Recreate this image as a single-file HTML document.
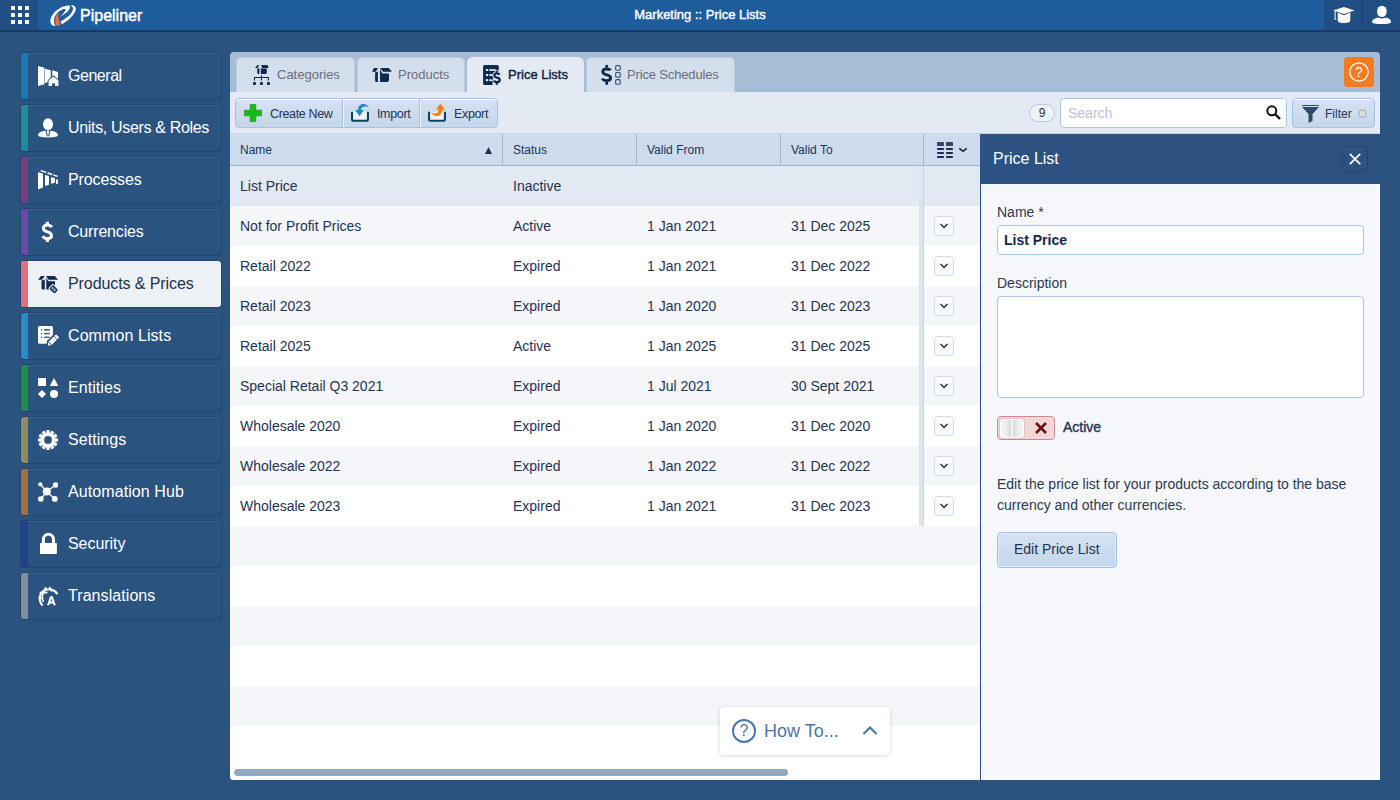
<!DOCTYPE html>
<html><head><meta charset="utf-8">
<style>
*{box-sizing:border-box;margin:0;padding:0}
html,body{width:1400px;height:800px;overflow:hidden;background:#2a5380;font-family:"Liberation Sans",sans-serif;position:relative}
div,span,svg{position:absolute}
#top{left:0;top:0;width:1400px;height:32px;background:#1f5c9c;border-bottom:2px solid #173966}
#gridbox{left:0;top:0;width:38px;height:30px;background:#214f83}
#gridbox i{position:absolute;width:4px;height:4px;background:#fff}
#logo{left:46px;top:2px}
#brand{left:80px;top:7px;color:#fff;font-size:16px;-webkit-text-stroke:0.45px #fff}
#title{left:0;width:1400px;top:7px;text-align:center;color:#fff;font-size:13px;-webkit-text-stroke:0.4px #fff}
#hat{left:1324px;top:0;width:38px;height:30px;background:#214f83}
#usr{left:1362px;top:0;width:38px;height:30px;background:#214f83;border-left:1px solid #1b4474}
.side{left:21px;width:200px;height:46px;background:#2a5380;border-radius:3px;box-shadow:0 0 0 1px #23466f, 0 1px 0 0 #142f52, inset 0 1px 0 #3c6290;}
.side.act{background:#edf1f6;box-shadow:0 0 0 1px #23466f, 0 1px 0 0 #142f52}
.side .bar{left:0;top:0;bottom:0;width:7px;border-radius:3px 0 0 3px}
.side .lbl{left:47px;top:14px;color:#fff;font-size:16px;letter-spacing:-0.22px;white-space:nowrap}
.side.act .lbl{color:#22324e}
.side .ic{left:17px;top:13px;width:20px;height:22px}
#panel{left:230px;top:52px;width:1150px;height:728px;background:#fff;border-radius:4px 4px 0 0;overflow:hidden}
#tabbar{left:230px;top:52px;width:1150px;height:40px;background:#a7bcd5;border-radius:4px 4px 0 0}
.tab{top:57px;height:35px;background:#d3dfec;border-radius:6px 6px 0 0;color:#6a6e76;font-size:13px;box-shadow:inset 1px 0 0 #bccde0, inset -1px 0 0 #bccde0, inset 0 1px 0 #bccde0}
.tab.act{background:#e3eaf3;color:#15233d;-webkit-text-stroke:0.4px #15233d;box-shadow:none}
.tab span{top:10px;white-space:nowrap}
#toolbar{left:230px;top:92px;width:1150px;height:42px;background:#e3eaf3;border-bottom:1px solid #c5d3e3}
.btngrp{left:235px;top:98px;width:263px;height:30px;border:1px solid #a5c2e3;border-radius:4px;background:linear-gradient(#d5e2f1,#c4d6eb);overflow:hidden;box-shadow:inset 0 1px 0 #fff}
.btn{top:0;height:28px;color:#233556;font-size:12.5px;letter-spacing:-0.35px}
.btn span{top:8px;white-space:nowrap}
.sep{top:0;width:1px;height:28px;background:#a5c2e3;box-shadow:1px 0 0 #eef4fa}
#badge{left:1029px;top:104px;width:26px;height:18px;border:1px solid #b6c8de;border-radius:9px;background:#eef3f9;color:#333;font-size:12px;text-align:center;line-height:16px}
#search{left:1060px;top:98px;width:227px;height:30px;border:1px solid #a9c6e8;border-radius:4px;background:#fff}
#search span{left:7px;top:6px;color:#b9c4d1;font-size:14px}
#filter{left:1292px;top:98px;width:83px;height:30px;border:1px solid #a5c2e3;border-radius:4px;background:linear-gradient(#d5e2f1,#c4d6eb);box-shadow:inset 0 1px 0 #fff}
#help{left:1344px;top:57px;width:30px;height:30px;background:#f47b20;border-radius:4px}
#ghead{left:230px;top:134px;width:750px;height:32px;background:#cddcec;border-bottom:1px solid #9fb6d0;box-shadow:inset 0 1px 0 #dae5f1}
.gh{top:10px;color:#1e3356;font-size:12px;white-space:nowrap}
.gsep{top:0;width:1px;height:31px;background:#a0b7d1}
.row{left:230px;width:750px;height:40px;overflow:hidden}
.row span{top:12px;font-size:14px;color:#1f3354;white-space:nowrap}
.dd{left:704px;top:10px;width:20px;height:20px;border:1px solid #cfdbea;border-radius:4px;background:#f8fafc}
.dd svg{left:4px;top:6px}
#frz{left:919px;top:166px;width:4px;height:360px;background:#dce4ee}
#frz2{left:923px;top:166px;width:1px;height:360px;background:#c9d6e5}
#scroll{left:234px;top:769px;width:554px;height:7px;background:#93a9bf;border-radius:4px}
#howto{left:720px;top:707px;width:170px;height:48px;background:#fff;border-radius:4px;box-shadow:0 1px 4px rgba(0,0,0,.15)}
#howto span{left:44px;top:14px;font-size:18px;color:#4a76a8;white-space:nowrap}
#rph{left:980px;top:134px;width:400px;height:50px;background:#2c5282}
#rph span{left:13px;top:16px;color:#fff;font-size:16px}
#rpb{left:980px;top:184px;width:400px;height:596px;background:#f5f7fa;border-left:1px solid #2c5282}
#close{left:1342px;top:146px;width:26px;height:26px;border:1px solid #24466f;border-radius:3px}
.flbl{font-size:14px;color:#2a3a55;white-space:nowrap}
#nameinp{left:997px;top:225px;width:367px;height:30px;border:1px solid #a9c6e8;border-radius:4px;background:#fff}
#nameinp span{left:6px;top:6px;font-size:14px;font-weight:bold;color:#14264a}
#descinp{left:997px;top:296px;width:367px;height:102px;border:1px solid #a9c6e8;border-radius:4px;background:#fff}
#tog{left:997px;top:416px;width:58px;height:24px;border:1px solid #d3868c;border-radius:4px;background:#f3d6d8}
#tog .knob{left:2px;top:2px;width:24px;height:19px;border:1px solid #fff;border-radius:3px;box-shadow:0 0 0 1px #e2c4c6;background:linear-gradient(90deg,#f6f6f6 0%,#ececec 25%,#dadada 42%,#fafafa 50%,#dadada 58%,#ececec 75%,#f6f6f6 100%)}
#actlbl{left:1063px;top:419px;font-size:14px;color:#253856;-webkit-text-stroke:0.4px #253856}
#desc{left:997px;top:474px;width:370px;font-size:14px;line-height:21px;color:#2c3a50}
#editbtn{left:997px;top:532px;width:120px;height:36px;border:1px solid #9dbde3;border-radius:4px;background:linear-gradient(#d7e3f1,#c3d6ec);box-shadow:inset 0 0 0 1px #e4edf7}
#editbtn span{left:16px;top:8px;font-size:14px;color:#22324e;white-space:nowrap}
#gridbg{left:230px;top:166px;width:750px;height:614px;background:#fff;border-radius:0 0 0 3px}

</style></head><body>
<div id="top"></div>
<div id="gridbox"><i style="left:11px;top:6px"></i><i style="left:18px;top:6px"></i><i style="left:25px;top:6px"></i><i style="left:11px;top:13px"></i><i style="left:18px;top:13px"></i><i style="left:25px;top:13px"></i><i style="left:11px;top:20px"></i><i style="left:18px;top:20px"></i><i style="left:25px;top:20px"></i></div>
<svg id="logo" width="34" height="26" viewBox="0 0 34 26"><path fill="#fff" d="M7.8 24C3.5 22.5 3 17 7.5 11.5C11.5 6.8 17.5 3.8 22.3 3.6C24.6 3.6 24.6 5.6 22.8 8C20.8 10.6 17.5 13 14 14.8C16.2 12.6 18.6 10.2 19.4 8.4C20 7 19 6.6 16.5 7.4C12.5 8.8 9 12.6 8.2 16.6C7.7 19.6 8.3 22.2 9.6 24Z"/><path fill="#fff" d="M25.3 3C28.6 3.4 30.6 5.6 29.6 8.6C28 13.2 22.2 19 16.1 22.3L14.3 19.6C19.2 17.2 24.2 13.2 26.4 9.2C27.6 6.8 27 4.9 25.3 3.8Z"/><path fill="#f26b3a" d="M12.4 10.2C10.5 12.5 9 16 9.2 19C9.3 21.5 10.3 23.5 11.2 24L14.6 22.6C13 20 12.2 16 12.4 10.2Z"/></svg>
<div id="brand">Pipeliner</div>
<div id="title">Marketing :: Price Lists</div>
<div id="hat"><svg style="left:9px;top:0px" width="23" height="26" viewBox="0 0 23 26"><path fill="#fff" d="M0.1 10.6L11 7.1L21.6 10.6L11 14Z"/><path fill="#fff" d="M4.7 12.4L11 15.2L17.3 12.4V20.4Q17.3 22.9 11 22.9Q4.7 22.9 4.7 20.4Z"/><path stroke="#fff" stroke-width="1" d="M2.1 10.6V17.6"/><path fill="#fff" d="M0.9 19.6L2.3 17.2L3.3 19.6Z"/></svg></div>
<div id="usr"><svg style="left:8px;top:0px" width="21" height="26" viewBox="0 0 21 26"><ellipse cx="10.9" cy="11.4" rx="4.8" ry="5.7" fill="#fff"/><path fill="#fff" d="M1 22C1 19.6 3.4 18 7.2 17.4Q10.9 19.6 14.6 17.4C18.4 18 20.1 19.6 20.1 22Q20.1 24 10.9 24Q1 24 1 22Z"/></svg></div>
<div class="side" style="top:53px"><div class="bar" style="background:#1b79b9"></div><div class="ic"><svg width="22" height="22" viewBox="0 0 22 22" style="overflow:visible"><path fill="#fff" d="M0 0L6.5 1.75V18.25L0 20Z M7 2.75L12.75 4.25V13L8.8 16.6L7 17Z M14.25 4.25L20 6V13.6L15.5 9.8L14.25 10.9Z"/><path fill="#2a5380" stroke="#2a5380" stroke-width="1.6" d="M10.6 14.6L15.5 10.4L20.4 14.6V20H10.6Z"/><path fill="#fff" d="M10.6 14.6L15.5 10.4L20.4 14.6V20H17.1V17.4H14V20H10.6Z"/></svg></div><div class="lbl" style="letter-spacing:-0.46px">General</div></div>
<div class="side" style="top:105px"><div class="bar" style="background:#1f8d99"></div><div class="ic"><svg width="22" height="22" viewBox="0 0 22 22" style="overflow:visible"><ellipse cx="10" cy="6.2" rx="5" ry="6" fill="#fff"/><path fill="#fff" d="M0 17.6C0 14.6 3 13.2 7.4 12.7H12.6C17 13.2 20 14.6 20 17.6Q20 19.4 10 19.4Q0 19.4 0 17.6Z"/><path fill="none" stroke="#2a5380" stroke-width="1.1" d="M8.1 12.6L9.3 18.4 M11.9 12.6L10.7 18.4"/></svg></div><div class="lbl" style="letter-spacing:-0.33px">Units, Users &amp; Roles</div></div>
<div class="side" style="top:157px"><div class="bar" style="background:#7c3d80"></div><div class="ic"><svg width="20" height="20" viewBox="0 0 20 20"><path fill="#fff" d="M0 2.2L5 3.6V17.6L0 19.4Z M7 5L11 6V14.8L7 15.9Z M13 7.2L17 8.1V12.8L13 13.8Z M18 9.2L20 9.8V13.6L18 14.2Z"/><path stroke="#fff" stroke-width="1.4" d="M2.6 0.6L8.2 2.4 M9.6 3L14.2 4.5 M15.3 5L19.6 6.4"/></svg></div><div class="lbl" style="letter-spacing:-0.13px">Processes</div></div>
<div class="side" style="top:209px"><div class="bar" style="background:#6a4aa6"></div><div class="ic"><svg width="22" height="22" viewBox="0 0 22 22" style="overflow:visible"><path fill="none" stroke="#fff" stroke-width="3" d="M13.6 5.2C12.8 3.8 11.2 3.1 9.3 3.1C6.9 3.1 5.4 4.4 5.4 6.3C5.4 8.5 7.4 9.3 9.5 9.9C11.8 10.5 13.5 11.4 13.5 13.7C13.5 15.7 11.7 16.6 9.3 16.6C7.2 16.6 5.6 15.8 4.9 14.2"/><rect x="7.8" y="-0.25" width="3.2" height="2.4" fill="#fff"/><rect x="7.8" y="17.4" width="3.2" height="2.6" fill="#fff"/></svg></div><div class="lbl" style="letter-spacing:-0.18px">Currencies</div></div>
<div class="side act" style="top:261px"><div class="bar" style="background:#e0707a"></div><div class="ic"><svg width="22" height="22" viewBox="0 0 22 22"><path fill="#0f2a4d" d="M0 5.8L3 2H6.8L4 5.8Z M8.2 2H16.8L20 5.8H10.5Z M3.5 6.6L6.8 5.4V15.6H5Q3.5 15.6 3.5 14.1Z M8.3 3.2L10.3 7.2H17V12L14 15.6H8.3Z"/><g transform="rotate(45 15.6 15.2)"><rect x="11" y="11.6" width="9.4" height="7.2" rx="2" fill="#edf1f6"/><rect x="12" y="12.6" width="7.4" height="5.2" rx="1.4" fill="#0f2a4d"/><rect x="15.3" y="13.8" width="3" height="2.8" fill="#8497b0"/><circle cx="13.9" cy="15.2" r="0.9" fill="#edf1f6"/></g></svg></div><div class="lbl" style="letter-spacing:-0.09px">Products &amp; Prices</div></div>
<div class="side" style="top:313px"><div class="bar" style="background:#2a8cc4"></div><div class="ic"><svg width="22" height="22" viewBox="0 0 22 22"><path fill="#fff" d="M1.5 0H13.4Q14.9 0 14.9 1.5V9L9 15L8.6 17.75H1.5Q0 17.75 0 16.25V1.5Q0 0 1.5 0Z"/><g fill="#2a5380"><rect x="2.9" y="3.1" width="1.2" height="1.5"/><rect x="6.1" y="3.1" width="5.7" height="1.5"/><rect x="2.9" y="6.9" width="1.2" height="1.3"/><rect x="6.1" y="6.9" width="5.7" height="1.3"/><rect x="2.9" y="10.6" width="1.2" height="1.3"/><rect x="6.1" y="10.6" width="5.7" height="1.3"/></g><g transform="translate(9.9 19.6) rotate(-45)"><g fill="#2a5380" stroke="#2a5380" stroke-width="2"><path d="M0 0L2.6 -2.2V2.2Z"/><rect x="3.2" y="-2.2" width="10.4" height="4.4"/></g><g fill="#fff"><path d="M0 0L2.6 -2.2V2.2Z"/><rect x="3.3" y="-2.2" width="7.2" height="4.4"/><rect x="11.2" y="-2.2" width="2.6" height="4.4" rx="0.8"/></g></g></svg></div><div class="lbl" style="letter-spacing:0.08px">Common Lists</div></div>
<div class="side" style="top:365px"><div class="bar" style="background:#1f8e48"></div><div class="ic"><svg width="20" height="20" viewBox="0 0 20 20"><rect x="0" y="0" width="8" height="8" fill="#fff"/><path fill="#fff" d="M16 0L20.2 8H11.8Z"/><path fill="#fff" d="M4 12L8 16L4 20L0 16Z"/><circle cx="16" cy="16" r="4" fill="#fff"/></svg></div><div class="lbl" style="letter-spacing:0.07px">Entities</div></div>
<div class="side" style="top:417px"><div class="bar" style="background:#8c8c5c"></div><div class="ic"><svg width="20" height="20" viewBox="0 0 20 20"><g fill="#fff"><circle cx="10" cy="10" r="7.6"/><rect x="8.4" y="0" width="3.2" height="4" transform="rotate(0 10 10)"/><rect x="8.4" y="0" width="3.2" height="4" transform="rotate(30 10 10)"/><rect x="8.4" y="0" width="3.2" height="4" transform="rotate(60 10 10)"/><rect x="8.4" y="0" width="3.2" height="4" transform="rotate(90 10 10)"/><rect x="8.4" y="0" width="3.2" height="4" transform="rotate(120 10 10)"/><rect x="8.4" y="0" width="3.2" height="4" transform="rotate(150 10 10)"/><rect x="8.4" y="0" width="3.2" height="4" transform="rotate(180 10 10)"/><rect x="8.4" y="0" width="3.2" height="4" transform="rotate(210 10 10)"/><rect x="8.4" y="0" width="3.2" height="4" transform="rotate(240 10 10)"/><rect x="8.4" y="0" width="3.2" height="4" transform="rotate(270 10 10)"/><rect x="8.4" y="0" width="3.2" height="4" transform="rotate(300 10 10)"/><rect x="8.4" y="0" width="3.2" height="4" transform="rotate(330 10 10)"/></g><circle cx="10" cy="10" r="3.9" fill="#2a5380"/></svg></div><div class="lbl" style="letter-spacing:0.05px">Settings</div></div>
<div class="side" style="top:469px"><div class="bar" style="background:#a0703e"></div><div class="ic"><svg width="20" height="20" viewBox="0 0 20 20"><g fill="#fff"><circle cx="2.3" cy="2.3" r="2.1"/><circle cx="17.6" cy="3" r="2.8"/><circle cx="2.8" cy="17" r="2.8"/><circle cx="16.8" cy="16.9" r="2.9"/><circle cx="8.8" cy="9.6" r="4"/></g><path fill="none" stroke="#fff" stroke-width="1.3" d="M2.3 2.3L8.8 9.6L17.6 3 M2.8 17L8.8 9.6L16.8 16.9"/></svg></div><div class="lbl" style="letter-spacing:0.09px">Automation Hub</div></div>
<div class="side" style="top:521px"><div class="bar" style="background:#263f8d"></div><div class="ic"><svg width="22" height="22" viewBox="0 0 22 22" style="overflow:visible"><path fill="none" stroke="#fff" stroke-width="3" d="M5.4 9.5V5.4A5.05 5.05 0 0 1 15.5 5.4V9.5"/><rect x="2" y="8.9" width="16.9" height="11.1" rx="0.8" fill="#fff"/></svg></div><div class="lbl" style="letter-spacing:-0.06px">Security</div></div>
<div class="side" style="top:573px"><div class="bar" style="background:#7e909e"></div><div class="ic"><svg width="22" height="22" viewBox="0 0 22 22" style="overflow:visible"><path fill="none" stroke="#fff" stroke-width="2.1" d="M19.4 8.2A9.4 9.4 0 1 0 4.6 19.4"/><path fill="none" stroke="#fff" stroke-width="1.6" d="M1.6 6.6H9.4 M8.2 1.4Q4.8 5 4.4 10Q4.2 13.4 5.4 16 M11.2 1.2Q13.2 3 13.8 5.6 M0.6 12.2H4.6"/><path fill="#fff" fill-rule="evenodd" stroke="#2a5380" stroke-width="1.2" paint-order="stroke" d="M9 19.2L12.2 10H14.6L17.8 19.2H15.5L14.9 17.4H11.9L11.3 19.2Z M12.5 15.5H14.3L13.4 12.6Z"/></svg></div><div class="lbl" style="letter-spacing:0.07px">Translations</div></div>
<div id="tabbar"></div>
<div class="tab" style="left:236px;width:119px"><svg style="left:12px;top:3px" width="30" height="30" viewBox="0 0 30 30"><g fill="#0f2a4d"><path d="M7 7.9L9.5 4.9H11.2L9.6 7.9Z M13.1 4.9H19.4L20.8 7.9H14.3Z M9.2 8.4L11.4 8.2V13.9H10.6Q9.2 13.9 9.2 12.4Z M12.8 8.2L14 8.6H18.8V12.4Q18.8 13.9 17.3 13.9H12.8Z"/><rect x="5" y="22.1" width="2.9" height="2.8"/><rect x="12" y="22.1" width="2.9" height="2.8"/><rect x="19" y="22.1" width="2.9" height="2.8"/></g><path fill="none" stroke="#0f2a4d" stroke-width="1.1" d="M13.45 15.2V20.6 M6.5 20.6V17.5H20.4V20.6"/></svg><span style="left:41px">Categories</span></div>
<div class="tab" style="left:357px;width:108px"><svg style="left:11px;top:3px" width="30" height="30" viewBox="0 0 30 30"><path fill="#0f2a4d" d="M4 11.8L6 7.9H9.9L7.8 11.8Z M12 7.9H20.8L24 11.8H15.2Z M7.1 12.6L9.9 11.4V21.9H8.6Q7.1 21.9 7.1 20.4Z M12 9L14.3 13.6H21V19.9Q21 21.9 19 21.9H12Z"/></svg><span style="left:41px">Products</span></div>
<div class="tab act" style="left:467px;width:117px"><svg style="left:11px;top:3px" width="30" height="30" viewBox="0 0 30 30"><path fill="#0f2a4d" d="M6.6 4.9H19.3Q20.8 4.9 20.8 6.4V12H16L14.5 24.9H6.6Q5.1 24.9 5.1 23.4V6.4Q5.1 4.9 6.6 4.9Z"/><g fill="#e3eaf3"><rect x="7.9" y="9" width="2.2" height="2"/><rect x="7.9" y="14" width="2.2" height="2.1"/><rect x="7.9" y="19.1" width="2.2" height="2.1"/><rect x="11.2" y="9.2" width="6.6" height="1.7"/><rect x="11.2" y="14.2" width="3.8" height="1.7"/><rect x="11.2" y="19.3" width="3.4" height="1.7"/></g><path fill="none" stroke="#e3eaf3" stroke-width="4.1" d="M21.7 14.6C21.1 13.8 20.1 13.45 18.8 13.45C17.2 13.45 16.4 14.3 16.4 15.4C16.4 16.8 17.7 17.3 19.1 17.7C20.6 18.1 21.75 18.7 21.75 19.9C21.75 21.3 20.5 22.05 18.8 22.05C17.4 22.05 16.4 21.5 15.9 20.5"/><rect x="17" y="10.2" width="3.5" height="3" fill="#e3eaf3"/><rect x="17" y="22.3" width="3.5" height="3.2" fill="#e3eaf3"/><path fill="none" stroke="#0f2a4d" stroke-width="2.3" d="M21.7 14.6C21.1 13.8 20.1 13.45 18.8 13.45C17.2 13.45 16.4 14.3 16.4 15.4C16.4 16.8 17.7 17.3 19.1 17.7C20.6 18.1 21.75 18.7 21.75 19.9C21.75 21.3 20.5 22.05 18.8 22.05C17.4 22.05 16.4 21.5 15.9 20.5"/><rect x="17.7" y="10.9" width="2.1" height="1.9" fill="#0f2a4d"/><rect x="17.7" y="22.9" width="2.1" height="2" fill="#0f2a4d"/></svg><span style="left:41px">Price Lists</span></div>
<div class="tab" style="left:586px;width:149px"><svg style="left:10px;top:3px" width="30" height="30" viewBox="0 0 30 30"><path fill="none" stroke="#0f2a4d" stroke-width="2.9" d="M14.6 10.2C13.8 9.2 12.5 8.95 10.7 8.95C8.3 8.95 6.8 10.1 6.8 11.8C6.8 13.9 8.8 14.4 10.9 14.9C13.2 15.4 14.65 16.3 14.65 18.1C14.65 19.9 12.9 20.65 10.6 20.65C8.6 20.65 7 20 6.3 18.5"/><rect x="9.35" y="4.9" width="2.7" height="2.8" fill="#0f2a4d"/><rect x="9.35" y="21.9" width="2.7" height="2.85" fill="#0f2a4d"/><g fill="none" stroke="#3a5070" stroke-width="1.1"><rect x="19.65" y="5.65" width="4.6" height="4.6" rx="1"/><rect x="19.65" y="12.55" width="4.6" height="4.6" rx="1"/><rect x="19.65" y="19.65" width="4.6" height="4.6" rx="1"/></g></svg><span style="left:41px;letter-spacing:-0.15px">Price Schedules</span></div>
<div id="help"><svg style="left:5px;top:5px" width="20" height="20" viewBox="0 0 20 20"><circle cx="10" cy="10" r="9.2" fill="none" stroke="#fff" stroke-width="1.2"/><text x="10" y="15" text-anchor="middle" font-family="Liberation Sans" font-size="14" fill="#fff">?</text></svg></div>

<div id="toolbar"></div>
<div class="btngrp">
  <div class="btn" style="left:0;width:107px"><svg style="left:8px;top:5px" width="18" height="18" viewBox="0 0 18 18"><path fill="#16bd19" stroke="#0f9a13" stroke-width="0.7" d="M6.2 0.4H11.8V6.2H17.6V11.8H11.8V17.6H6.2V11.8H0.4V6.2H6.2Z"/></svg><span style="left:34px">Create New</span></div>
  <div class="sep" style="left:106px"></div>
  <div class="btn" style="left:107px;width:77px"><svg style="left:5px;top:1px" width="25" height="25" viewBox="0 0 25 25"><rect x="4" y="11.7" width="16" height="9" fill="#eef2f6"/><path fill="none" stroke="#0b4461" stroke-width="2.1" d="M4.05 11.7V19.6Q4.05 20.8 5.2 20.8H18.8Q19.95 20.8 19.95 19.6V11.7"/><path fill="#1e8cba" d="M7.2 10H10.1C10 6.5 12 4 15.5 4C18 4 19.8 5.5 20.6 7.6C19.3 6.6 17.8 6.3 16.3 6.5C14.2 6.8 13 8.2 13 10H15.9L11.6 16.3Z"/></svg><span style="left:34px">Import</span></div>
  <div class="sep" style="left:183px"></div>
  <div class="btn" style="left:184px;width:78px"><svg style="left:5px;top:1px" width="25" height="25" viewBox="0 0 25 25"><rect x="4" y="11.7" width="16" height="9" fill="#eef2f6"/><path fill="none" stroke="#0b4461" stroke-width="2.1" d="M4.05 11.7V19.6Q4.05 20.8 5.2 20.8H18.8Q19.95 20.8 19.95 19.6V11.7"/><path fill="#f77f00" d="M15.5 3.8L20 9.4H17.2C17.2 13.5 15 16 11.5 16C9 16 7.2 14.5 6 12.2C7.3 13.2 8.8 13.6 10.2 13.4C12.4 13.1 13.8 11.8 13.8 9.4H11Z"/></svg><span style="left:34px">Export</span></div>
</div>
<div id="badge">9</div>
<div id="search"><span>Search</span><svg style="left:205px;top:6px" width="15" height="15" viewBox="0 0 15 15"><circle cx="5.8" cy="5.8" r="4.5" fill="none" stroke="#111" stroke-width="2"/><path stroke="#111" stroke-width="2.4" d="M9 9L14 14"/></svg></div>
<div id="filter"><svg style="left:9px;top:5px" width="17" height="19" viewBox="0 0 17 19"><path fill="#2c4a6c" d="M0 1H17V2H0Z M0 3H17L10.5 10V17L6.5 19V10Z"/></svg><span style="left:32px;top:8px;font-size:12px;color:#233556">Filter</span><svg style="left:65px;top:10px" width="9" height="9" viewBox="0 0 9 9"><circle cx="4.5" cy="4.5" r="3.8" fill="#dcdcdc" stroke="#9aa6b3" stroke-width="0.9"/></svg></div>

<div id="ghead"></div>
<span class="gh" style="left:240px;top:143px">Name</span>
<svg style="left:485px;top:147px" width="7" height="7" viewBox="0 0 7 7"><path d="M3.5 0L7 7H0Z" fill="#1e2f55"/></svg>
<div class="gsep" style="left:502px;top:134px"></div>
<span class="gh" style="left:513px;top:143px">Status</span>
<div class="gsep" style="left:636px;top:134px"></div>
<span class="gh" style="left:647px;top:143px">Valid From</span>
<div class="gsep" style="left:780px;top:134px"></div>
<span class="gh" style="left:791px;top:143px">Valid To</span>
<div class="gsep" style="left:923px;top:134px"></div>
<svg style="left:936px;top:142px" width="32" height="17" viewBox="0 0 32 17"><g fill="#1f2d55"><rect x="1" y="0" width="7" height="4" rx="0.6" fill="#34456e"/><rect x="10" y="0" width="7" height="4" rx="0.6" fill="#34456e"/><rect x="1" y="6" width="7" height="1.9" rx="0.4"/><rect x="10" y="6" width="7" height="1.9" rx="0.4"/><rect x="1" y="10" width="7" height="1.9" rx="0.4"/><rect x="10" y="10" width="7" height="1.9" rx="0.4"/><rect x="1" y="14" width="7" height="1.9" rx="0.4"/><rect x="10" y="14" width="7" height="1.9" rx="0.4"/></g><path d="M23.3 6.3L27 9.3L30.7 6.3" fill="none" stroke="#1a1f2e" stroke-width="1.5"/></svg>

<div id="gridbg"></div>
<div class="row" style="top:166px;background:#e3e9f2"><span style="left:10px">List Price</span><span style="left:283px">Inactive</span><span style="left:417px"></span><span style="left:561px"></span></div>
<div class="row" style="top:206px;background:#f4f6f9"><span style="left:10px">Not for Profit Prices</span><span style="left:283px">Active</span><span style="left:417px">1 Jan 2021</span><span style="left:561px">31 Dec 2025</span><div class="dd"><svg width="10" height="6" viewBox="0 0 10 6"><path d="M1.5 1L5 4.5L8.5 1" fill="none" stroke="#1b2a40" stroke-width="1.35"/></svg></div></div>
<div class="row" style="top:246px;background:#ffffff"><span style="left:10px">Retail 2022</span><span style="left:283px">Expired</span><span style="left:417px">1 Jan 2021</span><span style="left:561px">31 Dec 2022</span><div class="dd"><svg width="10" height="6" viewBox="0 0 10 6"><path d="M1.5 1L5 4.5L8.5 1" fill="none" stroke="#1b2a40" stroke-width="1.35"/></svg></div></div>
<div class="row" style="top:286px;background:#f4f6f9"><span style="left:10px">Retail 2023</span><span style="left:283px">Expired</span><span style="left:417px">1 Jan 2020</span><span style="left:561px">31 Dec 2023</span><div class="dd"><svg width="10" height="6" viewBox="0 0 10 6"><path d="M1.5 1L5 4.5L8.5 1" fill="none" stroke="#1b2a40" stroke-width="1.35"/></svg></div></div>
<div class="row" style="top:326px;background:#ffffff"><span style="left:10px">Retail 2025</span><span style="left:283px">Active</span><span style="left:417px">1 Jan 2025</span><span style="left:561px">31 Dec 2025</span><div class="dd"><svg width="10" height="6" viewBox="0 0 10 6"><path d="M1.5 1L5 4.5L8.5 1" fill="none" stroke="#1b2a40" stroke-width="1.35"/></svg></div></div>
<div class="row" style="top:366px;background:#f4f6f9"><span style="left:10px">Special Retail Q3 2021</span><span style="left:283px">Expired</span><span style="left:417px">1 Jul 2021</span><span style="left:561px">30 Sept 2021</span><div class="dd"><svg width="10" height="6" viewBox="0 0 10 6"><path d="M1.5 1L5 4.5L8.5 1" fill="none" stroke="#1b2a40" stroke-width="1.35"/></svg></div></div>
<div class="row" style="top:406px;background:#ffffff"><span style="left:10px">Wholesale 2020</span><span style="left:283px">Expired</span><span style="left:417px">1 Jan 2020</span><span style="left:561px">31 Dec 2020</span><div class="dd"><svg width="10" height="6" viewBox="0 0 10 6"><path d="M1.5 1L5 4.5L8.5 1" fill="none" stroke="#1b2a40" stroke-width="1.35"/></svg></div></div>
<div class="row" style="top:446px;background:#f4f6f9"><span style="left:10px">Wholesale 2022</span><span style="left:283px">Expired</span><span style="left:417px">1 Jan 2022</span><span style="left:561px">31 Dec 2022</span><div class="dd"><svg width="10" height="6" viewBox="0 0 10 6"><path d="M1.5 1L5 4.5L8.5 1" fill="none" stroke="#1b2a40" stroke-width="1.35"/></svg></div></div>
<div class="row" style="top:486px;background:#ffffff"><span style="left:10px">Wholesale 2023</span><span style="left:283px">Expired</span><span style="left:417px">1 Jan 2021</span><span style="left:561px">31 Dec 2023</span><div class="dd"><svg width="10" height="6" viewBox="0 0 10 6"><path d="M1.5 1L5 4.5L8.5 1" fill="none" stroke="#1b2a40" stroke-width="1.35"/></svg></div></div>
<div class="row" style="top:526px;background:#f4f6f9;height:40px"></div>
<div class="row" style="top:566px;background:#ffffff;height:40px"></div>
<div class="row" style="top:606px;background:#f4f6f9;height:40px"></div>
<div class="row" style="top:646px;background:#ffffff;height:40px"></div>
<div class="row" style="top:686px;background:#f4f6f9;height:40px"></div>
<div class="row" style="top:726px;background:#ffffff;height:40px"></div>
<div id="frz"></div>
<div id="frz2"></div>
<div id="scroll"></div>
<div id="howto"><svg style="left:12px;top:12px" width="24" height="24" viewBox="0 0 24 24"><circle cx="12" cy="12" r="11" fill="none" stroke="#4a76a8" stroke-width="2"/><text x="12" y="17.4" text-anchor="middle" font-family="Liberation Sans" font-size="16" fill="#4a76a8">?</text></svg><span>How To...</span><svg style="left:142px;top:18px" width="16" height="11" viewBox="0 0 16 11"><path d="M1.5 9L8 2.5L14.5 9" fill="none" stroke="#4a76a8" stroke-width="2.2"/></svg></div>

<div id="rph"><span>Price List</span></div>
<div id="close"><svg style="left:6px;top:6px" width="12" height="12" viewBox="0 0 12 12"><path d="M0.8 0.8L11.2 11.2M11.2 0.8L0.8 11.2" stroke="#fff" stroke-width="1.8"/></svg></div>
<div id="rpb"></div>
<span class="flbl" style="left:997px;top:204px">Name *</span>
<div id="nameinp"><span>List Price</span></div>
<span class="flbl" style="left:997px;top:275px">Description</span>
<div id="descinp"></div>
<div id="tog"><div class="knob"></div><svg style="left:37px;top:5px" width="12" height="12" viewBox="0 0 12 12"><path d="M1 1L11 11M11 1L1 11" stroke="#6e0d12" stroke-width="2.6"/></svg></div>
<span id="actlbl">Active</span>
<div id="desc">Edit the price list for your products according to the base currency and other currencies.</div>
<div id="editbtn"><span>Edit Price List</span></div>

</body></html>
